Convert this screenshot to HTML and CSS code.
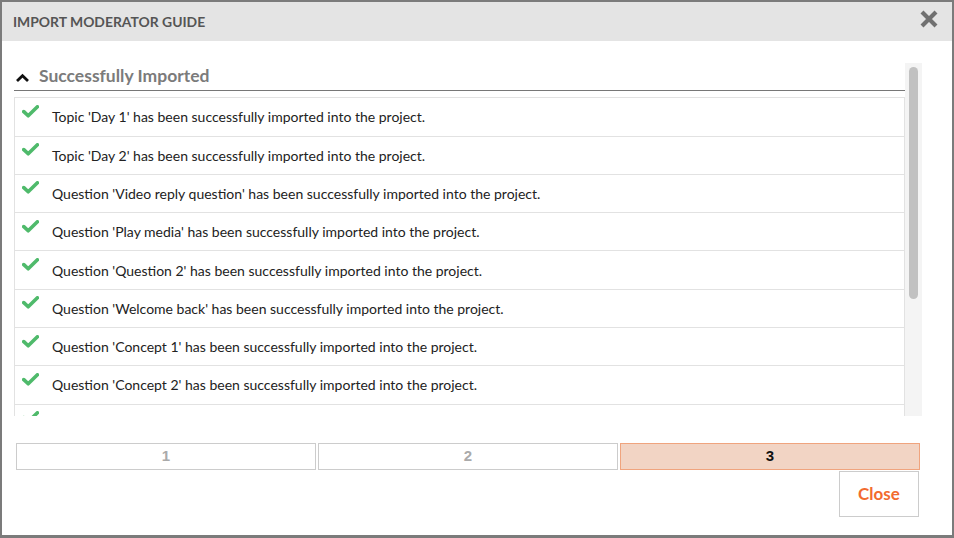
FILE: index.html
```html
<!DOCTYPE html>
<html lang="en">

<head>
  <meta charset="UTF-8">
  <meta name="viewport" content="width=device-width, initial-scale=1.0">
  <title>Import Moderator Guide</title>
  <link rel="stylesheet" href="styles.css">
</head>

<body>
  <div class="dialog">

    <div class="dialog-header">
      <h1 class="dialog-title">IMPORT MODERATOR GUIDE</h1>
      <button class="close-x" aria-label="Close">
        <svg width="20" height="20" viewBox="0 0 20 20">
          <path d="M3 3 L17 17 M17 3 L3 17" stroke="#707070" stroke-width="4.2" fill="none"/>
        </svg>
      </button>
    </div>

    <div class="dialog-body">

      <div class="scroll-area">
        <div class="scroll-content">
          <div class="section-title">
            <svg class="chevron" width="15" height="10" viewBox="0 0 15 10">
              <path d="M2 8 L7.5 2.8 L13 8" stroke="#111" stroke-width="2.8" fill="none"/>
            </svg>
            <span>Successfully Imported</span>
          </div>

          <ul class="result-list">
            <li><span class="check"></span>Topic 'Day 1' has been successfully imported into the project.</li>
            <li><span class="check"></span>Topic 'Day 2' has been successfully imported into the project.</li>
            <li><span class="check"></span>Question 'Video reply question' has been successfully imported into the project.</li>
            <li><span class="check"></span>Question 'Play media' has been successfully imported into the project.</li>
            <li><span class="check"></span>Question 'Question 2' has been successfully imported into the project.</li>
            <li><span class="check"></span>Question 'Welcome back' has been successfully imported into the project.</li>
            <li><span class="check"></span>Question 'Concept 1' has been successfully imported into the project.</li>
            <li><span class="check"></span>Question 'Concept 2' has been successfully imported into the project.</li>
            <li><span class="check"></span></li>
          </ul>
        </div>

        <div class="scrollbar">
          <div class="scrollbar-thumb"></div>
        </div>
      </div>

      <div class="steps">
        <div class="step">1</div>
        <div class="step">2</div>
        <div class="step active">3</div>
      </div>

      <button class="close-btn">Close</button>
    </div>
  </div>

  <script>
    // draw the check marks
    document.querySelectorAll(".check").forEach((c) => {
      c.innerHTML = '<svg width="17" height="13" viewBox="0 0 17 13"><path d="M1.8 6.6 L6.2 10.8 L15.4 1.8" stroke="#4fba6b" stroke-width="3.6" fill="none" stroke-linecap="round" stroke-linejoin="round"/></svg>';
    });
  </script>
</body>

</html>
```

FILE: styles.css
```css
* {
  margin: 0;
  padding: 0;
  box-sizing: border-box;
  font-family: Lato, "Open Sans", sans-serif;
}

body {
  width: 954px;
  height: 538px;
  background: #7b7b7b;
  padding: 2px 2px 3px 2px;
  overflow: hidden;
}

.dialog {
  background: #fff;
  height: 100%;
  display: flex;
  flex-direction: column;
}

.dialog-header {
  height: 39px;
  background: #e4e4e4;
  display: flex;
  align-items: center;
  justify-content: space-between;
  padding: 0 13px 0 11px;
}

.dialog-title {
  font-size: 13.9px;
  font-weight: bold;
  color: #555;
  margin-top: -1px;
}

.close-x {
  background: none;
  border: none;
  width: 20px;
  height: 20px;
  display: flex;
  margin-top: -6px;
}

.dialog-body {
  padding: 22px 30px 0 12px;
  display: flex;
  flex-direction: column;
}

.scroll-area {
  height: 353px;
  display: flex;
}

.scroll-content {
  flex: 1;
  overflow: hidden;
}

.scrollbar {
  width: 17px;
  background: #f4f4f4;
  padding: 4px 4px 0 4px;
}

.scrollbar-thumb {
  height: 232px;
  background: #c1c1c1;
  border-radius: 5px;
}

.section-title {
  display: flex;
  align-items: center;
  padding: 3px 0 4px 0;
  border-bottom: 1px solid #777;
  line-height: 20px;
  font-size: 17.5px;
  font-weight: bold;
  color: #7b7b7b;
}

.chevron {
  margin: 4px 9px 0 1px;
}

.result-list {
  list-style: none;
  margin-top: 6px;
  border: 1px solid #e2e2e2;
}

.result-list li {
  height: 38.3px;
  display: flex;
  align-items: center;
  border-bottom: 1px solid #e2e2e2;
  font-size: 14px;
  color: #222;
  padding-left: 7px;
}

.result-list li:first-child {
  height: 38.5px;
}

.check {
  width: 30px;
  height: 13px;
  margin-top: -11px;
  display: flex;
}

.steps {
  display: grid;
  grid-template-columns: 1fr 1fr 1fr;
  gap: 2px;
  margin: 27px 2px 0 2px;
}

.step {
  height: 27px;
  border: 1px solid #ccc;
  display: flex;
  align-items: center;
  justify-content: center;
  padding-bottom: 2px;
  font-family: "Liberation Sans", Arial, sans-serif;
  font-size: 15px;
  font-weight: bold;
  color: #aaa;
}

.step.active {
  background: #f2d4c4;
  border-color: #f0a47e;
  color: #111;
}

.close-btn {
  align-self: flex-end;
  margin: 1px 3px 0 0;
  width: 80px;
  height: 46px;
  padding-bottom: 2px;
  background: #fff;
  border: 1px solid #ccc;
  font-size: 17px;
  font-weight: bold;
  color: #f26b2f;
}
```
